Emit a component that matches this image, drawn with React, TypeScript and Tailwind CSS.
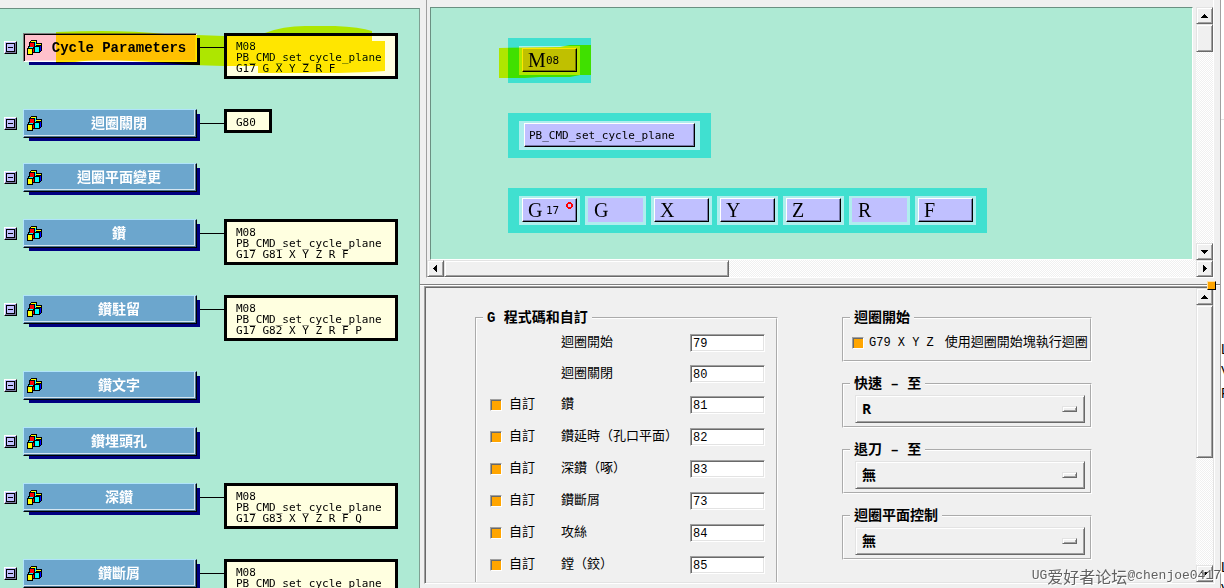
import { useState } from "react";
import clsx from "clsx";

// Classic 3D bevels shared by buttons, scrollbars and entries
const RAISED =
  "border border-t-[#e3e3e3] border-l-[#e3e3e3] border-r-[#696969] border-b-[#696969] shadow-[inset_1px_1px_0_#fff,inset_-1px_-1px_0_#a0a0a0]";
const SUNKEN =
  "border border-t-[#a0a0a0] border-l-[#a0a0a0] border-r-white border-b-white shadow-[inset_1px_1px_0_#696969,inset_-1px_-1px_0_#e3e3e3]";
const TRACK =
  "bg-[repeating-conic-gradient(#fff_0_25%,#f0f0f0_0_50%)] bg-size-[2px_2px]";
const MONO = "font-['DejaVu_Sans_Mono',monospace] text-[11px] leading-[11px]";
const CJK = "font-['Liberation_Mono','Noto_Sans_CJK_TC',monospace]";

interface CycleEvent {
  id: string;
  name: string;
  lines: string[];
  height: string;
}

const TALL = "h-[76px]";
const SHORT = "h-[56px]";

const events: CycleEvent[] = [
  {
    id: "params",
    name: "Cycle Parameters",
    lines: ["M08", "PB_CMD_set_cycle_plane", "G17 G X Y Z R F"],
    height: TALL,
  },
  { id: "off", name: "迴圈關閉", lines: ["G80"], height: "h-[54px]" },
  { id: "plane", name: "迴圈平面變更", lines: [], height: SHORT },
  {
    id: "drill",
    name: "鑽",
    lines: ["M08", "PB_CMD_set_cycle_plane", "G17 G81 X Y Z R F"],
    height: TALL,
  },
  {
    id: "dwell",
    name: "鑽駐留",
    lines: ["M08", "PB_CMD_set_cycle_plane", "G17 G82 X Y Z R F P"],
    height: TALL,
  },
  { id: "text", name: "鑽文字", lines: [], height: SHORT },
  { id: "csink", name: "鑽埋頭孔", lines: [], height: SHORT },
  {
    id: "deep",
    name: "深鑽",
    lines: ["M08", "PB_CMD_set_cycle_plane", "G17 G83 X Y Z R F Q"],
    height: TALL,
  },
  {
    id: "break",
    name: "鑽斷屑",
    lines: ["M08", "PB_CMD_set_cycle_plane"],
    height: TALL,
  },
];

const codes = [
  { name: "迴圈開始", value: "79", custom: false },
  { name: "迴圈關閉", value: "80", custom: false },
  { name: "鑽", value: "81", custom: true },
  { name: "鑽延時（孔口平面）", value: "82", custom: true },
  { name: "深鑽（啄）", value: "83", custom: true },
  { name: "鑽斷屑", value: "73", custom: true },
  { name: "攻絲", value: "84", custom: true },
  { name: "鏜（鉸）", value: "85", custom: true },
];

function CubesIcon() {
  return (
    <svg
      width="15"
      height="15"
      viewBox="0 0 15 15"
      shapeRendering="crispEdges"
      className="shrink-0"
      aria-hidden="true"
    >
      <path d="M4 0h6v3h5v8h-1v1h-1v1H6v2H0V8h1V6h1V2h1V1h1z" fill="#000" />
      <path d="M4 1h5v1H4z" fill="#ff0" />
      <path d="M8 2h1v4H8z" fill="#0ff" />
      <path d="M3 3h4v4H3z" fill="#f00" />
      <path d="M2 7h4v1H2z" fill="#0ff" />
      <path d="M1 9h4v5H1z" fill="#ff0" />
      <path d="M6 9h1v3H6z" fill="#f00" />
      <path d="M9 4h5v1H9z" fill="#ff0" />
      <path d="M8 7h4v5H8z" fill="#0ff" />
      <path d="M13 6h1v5h-1z" fill="#00f" />
    </svg>
  );
}

function Arrow({ dir, className }: { dir: "up" | "down" | "left" | "right"; className?: string }) {
  const paths = {
    up: "M3 2h1v1h1v1h1v1h1v1H0V5h1V4h1V3h1z",
    down: "M0 2h7v1H6v1H5v1H4v1H3V5H2V4H1V3H0z",
    left: "M4 0h1v7H4V6H3V5H2V4H1V3h1V2h1V1h1z",
    right: "M2 0h1v1h1v1h1v1h1v1H5v1H4v1H3v1H2z",
  };
  return (
    <button
      type="button"
      aria-label={`Scroll ${dir}`}
      className={clsx(
        "flex size-[17px] shrink-0 items-center justify-center bg-[#f0f0f0]",
        RAISED,
        className,
      )}
    >
      <svg width="7" height="7" viewBox="0 0 7 7" shapeRendering="crispEdges">
        <path d={paths[dir]} />
      </svg>
    </button>
  );
}

function EventRow({
  event,
  active,
  onSelect,
}: {
  event: CycleEvent;
  active: boolean;
  onSelect: () => void;
}) {
  return (
    <li className={clsx("flex items-start pl-1", event.height)}>
      <button
        type="button"
        aria-label="Collapse"
        className="mt-2 mr-1.5 flex size-[13px] shrink-0 items-center justify-center border border-t-white border-l-white border-r-black border-b-black bg-[#c0c0ff] shadow-[inset_-1px_-1px_0_#7878a0]"
      >
        <svg width="9" height="9" viewBox="0 0 9 9" shapeRendering="crispEdges">
          <path d="M0 0h9v9H0z" />
          <path d="M1 1h7v7H1z" fill="#c0c0ff" />
          <path d="M2 4h5v1H2z" />
        </svg>
      </button>
      <div className="relative shrink-0">
        <span className="absolute top-[5px] -right-[3px] -bottom-[3px] left-1.5 bg-[#000080]" />
        <button
          type="button"
          onClick={onSelect}
          className={clsx(
            "relative flex h-[29px] w-[174px] items-center border pl-[3px] text-[14px] font-bold",
            CJK,
            active
              ? "border-t-[#808080] border-l-[#808080] border-r-white border-b-white bg-[#ffc0cb] text-black shadow-[inset_1px_1px_0_#000,inset_-1px_-1px_0_#ffd8e0]"
              : "border-t-[#b0e4fa] border-l-[#b0e4fa] border-r-black border-b-black bg-[#6ca6cd] text-white shadow-[inset_-1px_-1px_0_#4a7290,inset_-2px_-2px_0_#d5e6f2]",
          )}
        >
          <CubesIcon />
          <span className="flex-1 pt-0.5 text-center whitespace-nowrap">{event.name}</span>
        </button>
      </div>
      {event.lines.length > 0 && (
        <>
          <span className="mt-[14px] ml-[3px] h-px w-6 bg-black" />
          <pre
            className={clsx(
              "border-3 border-black bg-[#ffffe0] pt-[5px] pr-[13px] pb-0.5 pl-[9px]",
              MONO,
            )}
          >
            {event.lines.join("\n")}
          </pre>
        </>
      )}
    </li>
  );
}

function Block({ children }: { children: React.ReactNode }) {
  return <div className="flex h-[45px] gap-[5px] bg-[#40e0d0] px-[11px] py-2">{children}</div>;
}

function Token({
  letter,
  num,
  flat,
  mark,
}: {
  letter: string;
  num?: string;
  flat?: boolean;
  mark?: boolean;
}) {
  return (
    <div className="bg-[#afeeee] px-[3px] pt-0.5 pb-[3px]">
      <button
        type="button"
        className={clsx(
          "relative flex h-6 w-[55px] items-center border bg-[#c0c0ff] pl-[5px]",
          flat
            ? "border-[#c0c0ff]"
            : "border-t-white border-l-white border-r-black border-b-black shadow-[inset_-1px_-1px_0_#7878a8]",
        )}
      >
        <span className="w-[18px] text-left font-['Liberation_Serif',serif] text-[20px] leading-5">
          {letter}
        </span>
        {num && <span className={MONO}>{num}</span>}
        {mark && (
          <svg
            width="7"
            height="7"
            viewBox="0 0 7 7"
            shapeRendering="crispEdges"
            className="absolute top-[3px] right-[3px]"
          >
            <path
              d="M2 0h3v1h1v1h1v3H6v1H5v1H2V6H1V5H0V2h1V1h1zM2 2v3h3V2z"
              fill="#f00"
              fillRule="evenodd"
            />
          </svg>
        )}
      </button>
    </div>
  );
}

function Group({
  title,
  children,
  className,
}: {
  title: string;
  children: React.ReactNode;
  className?: string;
}) {
  return (
    <fieldset className={clsx("border-2 border-white [border-style:groove]", className)}>
      <legend className="ml-1.5 px-1 text-[14px] leading-[18px] font-bold whitespace-pre">
        {title}
      </legend>
      {children}
    </fieldset>
  );
}

function Check({ id }: { id: string }) {
  const [on, setOn] = useState(true);
  return (
    <input
      id={id}
      type="checkbox"
      checked={on}
      onChange={() => setOn(!on)}
      className="size-3 shrink-0 appearance-none border border-t-[#a0a0a0] border-r-white border-b-white border-l-[#a0a0a0] bg-[#f0f0f0] shadow-[inset_1px_1px_0_#696969] checked:bg-[#ffa500]"
    />
  );
}

function OptionMenu({ label, options }: { label: string; options: string[] }) {
  return (
    <div className="relative pt-0.5 pr-[5px] pb-[3px] pl-[11px]">
      <select
        aria-label={label}
        className={clsx(
          "block h-7 w-full appearance-none bg-[#f0f0f0] pl-1.5 font-['Open_Sans','Noto_Sans_CJK_TC',sans-serif] text-[14px] leading-5 font-bold",
          RAISED,
        )}
      >
        {options.map((option) => (
          <option key={option}>{option}</option>
        ))}
      </select>
      <span
        className={clsx("pointer-events-none absolute top-[13px] right-[13px] h-1.5 w-[15px]", RAISED)}
      />
    </div>
  );
}

export default function App() {
  const [selected, setSelected] = useState("params");

  return (
    <div className={clsx("flex h-screen overflow-hidden bg-[#f0f0f0] text-black", CJK)}>
      {/* Event tree */}
      <aside className="flex w-[420px] shrink-0 flex-col pt-2">
        <ul className="relative isolate flex-1 overflow-hidden border-t border-r border-t-[#6b9082] border-r-[#7fa093] bg-[#aeead4] pt-6">
          {events.map((event) => (
            <EventRow
              key={event.id}
              event={event}
              active={event.id === selected}
              onSelect={() => setSelected(event.id)}
            />
          ))}
          {/* Marker strokes */}
          <svg
            width="400"
            height="80"
            viewBox="0 9 400 80"
            className="pointer-events-none absolute top-0 left-0 mix-blend-darken"
            aria-hidden="true"
          >
            <path
              d="M56 32Q120 29 165 34L197 35 224 36 265 33Q283 26 305 26H335Q360 27 372 31V41H385V71Q350 73 325 73H258V66H224Q195 66 165 63 100 58 75 62L56 63z"
              fill="#ffe600"
            />
          </svg>
        </ul>
      </aside>

      <main className="flex min-w-0 flex-1 flex-col">
        {/* Block template */}
        <section className="mr-1.5 ml-1.5 grid grid-cols-[1fr_auto] border-r border-b border-l border-r-white border-b-white border-l-[#a0a0a0] pt-[7px]">
          <div className="px-[3px]">
            <div className="relative isolate flex flex-col items-start gap-[30px] border border-t-[#6b9082] border-r-white border-b-white border-l-[#6b9082] bg-[#aeead4] pt-[30px] pb-[26px] pl-[77px]">
              <Block>
                <Token letter="M" num="08" />
              </Block>
              <Block>
                <div className="bg-[#afeeee] px-[5px] pt-0.5 pb-[3px]">
                  <button
                    type="button"
                    className={clsx(
                      "flex h-6 w-[171px] items-center border border-t-white border-l-white border-r-black border-b-black bg-[#c0c0ff] pl-1 shadow-[inset_-1px_-1px_0_#7878a8]",
                      MONO,
                    )}
                  >
                    PB_CMD_set_cycle_plane
                  </button>
                </div>
              </Block>
              <Block>
                <Token letter="G" num="17" mark />
                <Token letter="G" flat />
                <Token letter="X" />
                <Token letter="Y" />
                <Token letter="Z" />
                <Token letter="R" flat />
                <Token letter="F" />
              </Block>
              <svg
                width="92"
                height="33"
                viewBox="499 45 92 33"
                className="pointer-events-none absolute top-[37px] left-[68px] mix-blend-darken"
                aria-hidden="true"
              >
                <path d="M499 48L560 47 570 45H591V75H580L570 77 540 77 525 78H499z" fill="#ffe600" />
              </svg>
            </div>
          </div>
          <div className={clsx("flex flex-col", TRACK)}>
            <Arrow dir="up" />
            <div className={clsx("h-7 bg-[#f0f0f0]", RAISED)} />
            <Arrow dir="down" className="mt-auto" />
          </div>
          <div className={clsx("flex", TRACK)}>
            <Arrow dir="left" />
            <div className={clsx("w-[37%] bg-[#f0f0f0]", RAISED)} />
          </div>
          <Arrow dir="right" />
        </section>

        {/* Sash */}
        <div className="relative z-10 mt-1.5 h-0.5 shrink-0 border-t border-t-[#808080] bg-white">
          <span className="absolute -top-1 right-1 size-[9px] border border-t-[#ffe0a0] border-l-[#ffe0a0] border-r-black border-b-black bg-[#ffa500]" />
        </div>

        {/* Cycle settings */}
        <section
          className={clsx("mr-[5px] mb-1 ml-1 flex min-h-0 flex-1 overflow-hidden p-px", SUNKEN)}
        >
          <div className="flex min-w-0 flex-1 items-start gap-16 overflow-hidden pt-[21px] pl-[49px] text-[13px]">
            <Group title="G 程式碼和自訂" className="pb-4">
              {codes.map((code) => (
                <div
                  key={code.name}
                  className={clsx(
                    "flex items-center pr-[11px] pl-[13px]",
                    code.custom ? "h-8" : "h-[31px]",
                  )}
                >
                  <div className="flex w-[71px] items-center gap-[7px]">
                    {code.custom && (
                      <>
                        <Check id={`custom-${code.value}`} />
                        <label htmlFor={`custom-${code.value}`}>自訂</label>
                      </>
                    )}
                  </div>
                  <label htmlFor={`code-${code.value}`} className="w-[129px] whitespace-nowrap">
                    {code.name}
                  </label>
                  <input
                    id={`code-${code.value}`}
                    type="text"
                    defaultValue={code.value}
                    className={clsx("h-[18px] w-[75px] bg-white pt-0.5 pl-0.5 text-[12px]", SUNKEN)}
                  />
                </div>
              ))}
            </Group>

            <div className="flex w-[250px] shrink-0 flex-col gap-[13px]">
              <Group title="迴圈開始">
                <div className="mb-0.5 flex h-[31px] items-center gap-[5px] pl-2">
                  <Check id="use-start" />
                  <label htmlFor="use-start" className="flex items-center gap-[11px] whitespace-nowrap">
                    <span className="text-[12px]">G79 X Y Z</span>
                    <span>使用迴圈開始塊執行迴圈</span>
                  </label>
                </div>
              </Group>
              <Group title="快速 – 至">
                <OptionMenu label="快速 – 至" options={["R", "無"]} />
              </Group>
              <Group title="退刀 – 至">
                <OptionMenu label="退刀 – 至" options={["無", "R"]} />
              </Group>
              <Group title="迴圈平面控制">
                <OptionMenu label="迴圈平面控制" options={["無"]} />
              </Group>
            </div>
          </div>
          <div className={clsx("flex flex-col", TRACK)}>
            <Arrow dir="up" />
            <div className={clsx("h-[52%] bg-[#f0f0f0]", RAISED)} />
            <Arrow dir="down" className="mt-auto" />
          </div>
        </section>
      </main>

      {/* Neighbouring window peeking out */}
      <div className="w-1 shrink-0 overflow-hidden border-l border-[#a0a0a0] bg-white pt-[119px] font-['Liberation_Sans',sans-serif] text-[14px] leading-[22px]">
        <div className="h-px bg-[#e3e3e3]" />
        <div className="pt-[218px]">
          <p>L</p>
          <p>V</p>
          <p>R</p>
        </div>
        <div className="pt-[152px]">
          <p>L</p>
          <p>V</p>
        </div>
      </div>

      <p className="pointer-events-none fixed right-[3px] bottom-0 z-20 flex items-center leading-6 text-[#606060] [text-shadow:1px_1px_0_#fff]">
        <span className="text-[13px]">UG</span>
        <span className="font-['Noto_Sans_CJK_SC',sans-serif] text-[16px]">爱好者论坛</span>
        <span className="text-[13px]">@chenjoe0417</span>
      </p>
    </div>
  );
}
